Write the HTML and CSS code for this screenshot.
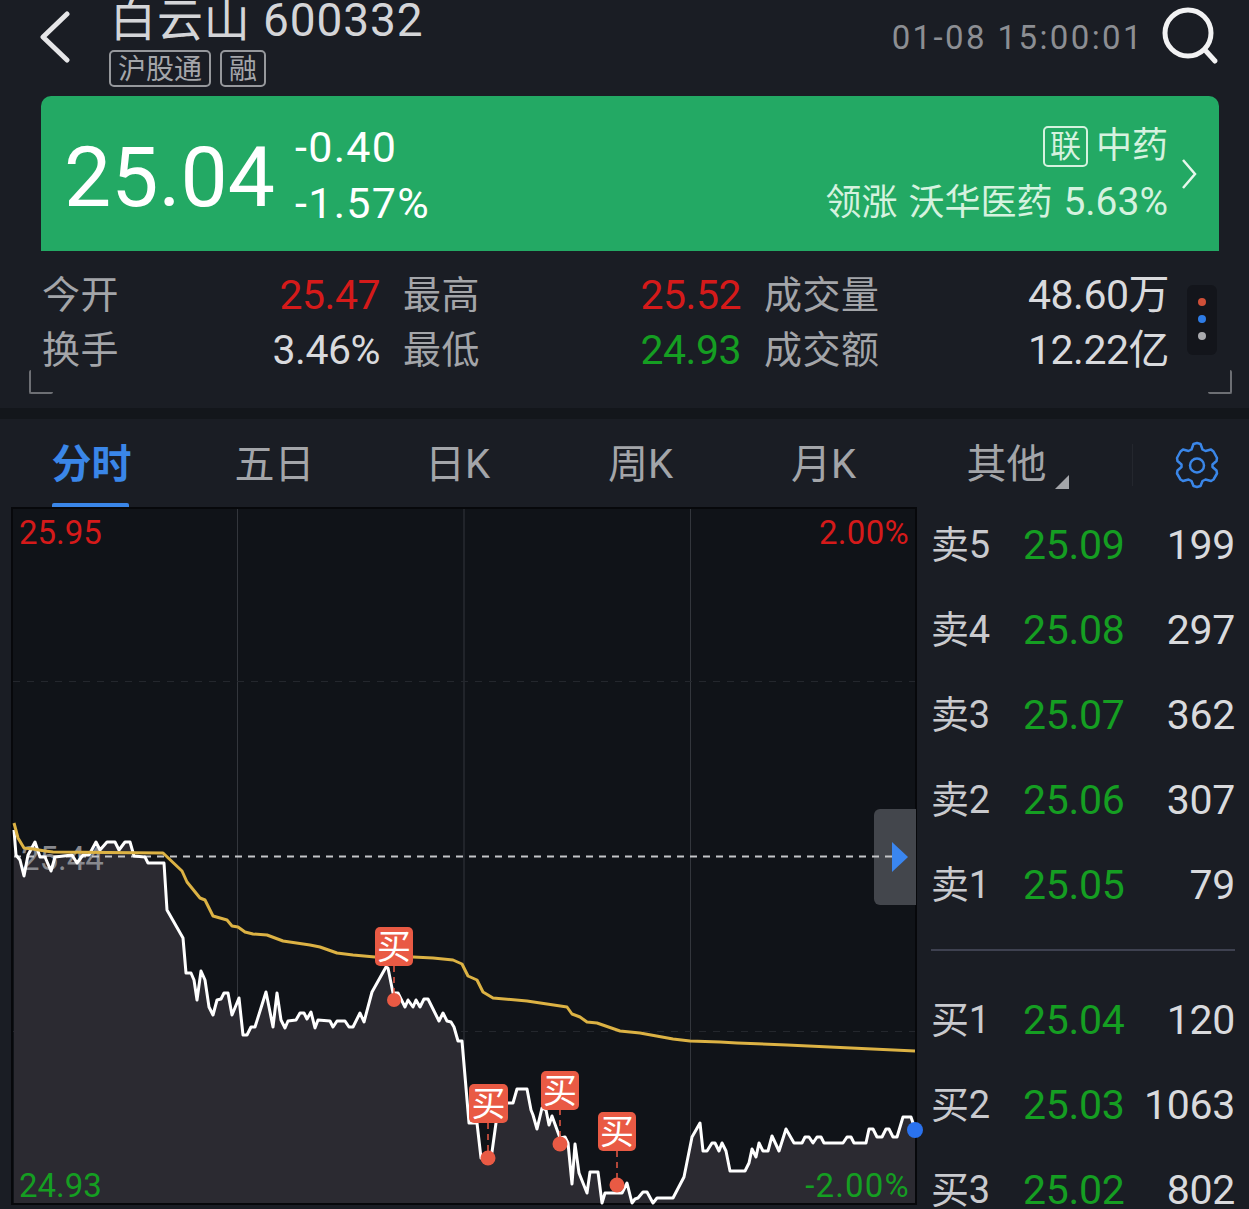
FILE: index.html
```html
<!DOCTYPE html>
<html lang="zh-CN">
<head>
  <meta charset="UTF-8" />
  <meta name="viewport" content="width=device-width, initial-scale=1.0"/>
  <title>白云山 600332</title>
  <link rel="stylesheet" href="styles.css">
</head>
<body>
<div class="page">

  <header class="topbar">
    <svg class="back" width="32" height="52" viewBox="0 0 32 52"><path d="M29 3 L5 26 L29 49" /></svg>
    <div class="title-block">
      <div class="title">白云山 600332</div>
      <div class="tags"><span class="tag">沪股通</span><span class="tag">融</span></div>
    </div>
    <div class="time">01-08 15:00:01</div>
    <svg class="search" width="60" height="60" viewBox="0 0 60 60"><circle cx="26" cy="27" r="23" /><path d="M43 44 L53 55" /></svg>
  </header>

  <section class="quote">
    <div class="price">25.04</div>
    <div class="change">
      <div>-0.40</div>
      <div>-1.57%</div>
    </div>
    <div class="sector">
      <div class="sector-name"><span class="lian">联</span>中药</div>
      <div class="sector-lead">领涨 沃华医药 <span class="lead-pct">5.63%</span></div>
    </div>
    <svg class="more" width="16" height="30" viewBox="0 0 16 30"><path d="M2 1 L14 15 L2 29" /></svg>
  </section>

  <section class="stats">
    <div class="stat-col">
      <div class="stat"><span class="stat-label">今开</span><span class="red">25.47</span></div>
      <div class="stat"><span class="stat-label">换手</span><span>3.46%</span></div>
    </div>
    <div class="stat-col">
      <div class="stat"><span class="stat-label">最高</span><span class="red">25.52</span></div>
      <div class="stat"><span class="stat-label">最低</span><span class="green">24.93</span></div>
    </div>
    <div class="stat-col wide">
      <div class="stat"><span class="stat-label">成交量</span><span>48.60万</span></div>
      <div class="stat"><span class="stat-label">成交额</span><span>12.22亿</span></div>
    </div>
    <div class="pager"><i class="dot-red"></i><i class="dot-blue"></i><i class="dot-grey"></i></div>
    <span class="corner corner-left"></span>
    <span class="corner corner-right"></span>
  </section>

  <nav class="tabs">
    <div class="tab active">分时</div>
    <div class="tab">五日</div>
    <div class="tab">日K</div>
    <div class="tab">周K</div>
    <div class="tab">月K</div>
    <div class="tab other">其他</div>
    <div class="tab-sep"></div>
    <svg class="gear" width="46" height="48" viewBox="0 0 46 48">
      <path d="M23 2 L26.5 3 L28.5 8.5 L31.5 10 L37 8.5 L39.5 10.5 L43 17 L42.5 20 L38.5 23.5 L38.5 26 L42.5 29.5 L43 32.5 L39.5 38.5 L37 40 L31.5 38.5 L28.5 40 L26.5 45 L23 46 L19.5 45 L17.5 40 L14.5 38.5 L9 40 L6.5 38.5 L3 32.5 L3.5 29.5 L7.5 26 L7.5 23.5 L3.5 20 L3 17 L6.5 10.5 L9 8.5 L14.5 10 L17.5 8.5 L19.5 3 Z" />
      <circle cx="23" cy="24.5" r="7" />
    </svg>
  </nav>

  <main class="board">
    <div class="chart">
      <svg class="chart-svg" width="906" height="698" viewBox="11 507 906 698">
        <g class="grid">
          <path d="M237.5 509V1203M464 509V1203M690.5 509V1203" />
        </g>
        <path class="grid-dash" d="M13 681.5H915M13 1031.5H915" />

        <polygon class="area" points="14,830 16,855 20,860 24,876 28,855 35,842 40,857 45,857 51,871 55,857 72,855 77,863 83,855 89,855 96,842 100,850 107,842 115,842 119,850 125,842 130,842 134,856 145,857 148,863 164,863 167,910 183,938 186,973 191,973 194,980 197,1000 201,971 205,980 209,1007 213,1015 217,1000 221,999 224,993 228,993 232,1015 239,998 243,1035 247,1035 251,1027 255,1027 266,992 273,1027 277,993 281,1020 285,1028 288,1021 296,1020 300,1013 304,1013 307,1019 311,1012 315,1028 318,1020 330,1021 333,1027 337,1021 345,1021 349,1027 353,1027 360,1013 364,1022 372,992 386,967 388,968 393,993 398,993 405,1007 408,1000 413,1007 416,1000 420,1007 424,999 428,999 439,1021 443,1013 447,1021 451,1022 454,1027 458,1041 462,1041 469,1123 477,1123 481,1158 492,1152 496,1123 500,1103 513,1103 517,1089 527,1089 531,1110 533,1115 537,1129 542,1108 546,1110 549,1125 552,1116 560,1138 565,1137 568,1143 572,1184 575,1144 579,1173 587,1193 590,1172 598,1172 602,1203 605,1193 622,1193 627,1183 632,1203 635,1199 638,1198 643,1192 647,1192 653,1203 657,1198 673,1198 684,1177 692,1137 700,1123 703,1151 707,1151 712,1143 715,1143 719,1151 722,1143 726,1151 730,1171 745,1171 749,1163 752,1149 756,1157 759,1143 763,1151 768,1151 772,1136 779,1151 786,1129 794,1143 802,1143 805,1137 809,1137 813,1143 817,1137 821,1137 824,1143 843,1143 847,1137 851,1137 854,1143 866,1143 869,1129 873,1129 877,1137 882,1137 886,1129 889,1129 893,1137 897,1137 903,1117 911,1117 915,1129 915,1203 14,1203" />

        <text class="axis axis-grey" x="21" y="870">25.44</text>

        <path class="handle" d="M916 809H880a6 6 0 0 0 -6 6V899a6 6 0 0 0 6 6H916Z" />
        <path class="prev-close" d="M14 856.5H905" />
        <polygon class="handle-arrow" points="892,842 908,857 892,872" />

        <polyline class="line-white" points="14,830 16,855 20,860 24,876 28,855 35,842 40,857 45,857 51,871 55,857 72,855 77,863 83,855 89,855 96,842 100,850 107,842 115,842 119,850 125,842 130,842 134,856 145,857 148,863 164,863 167,910 183,938 186,973 191,973 194,980 197,1000 201,971 205,980 209,1007 213,1015 217,1000 221,999 224,993 228,993 232,1015 239,998 243,1035 247,1035 251,1027 255,1027 266,992 273,1027 277,993 281,1020 285,1028 288,1021 296,1020 300,1013 304,1013 307,1019 311,1012 315,1028 318,1020 330,1021 333,1027 337,1021 345,1021 349,1027 353,1027 360,1013 364,1022 372,992 386,967 388,968 393,993 398,993 405,1007 408,1000 413,1007 416,1000 420,1007 424,999 428,999 439,1021 443,1013 447,1021 451,1022 454,1027 458,1041 462,1041 469,1123 477,1123 481,1158 492,1152 496,1123 500,1103 513,1103 517,1089 527,1089 531,1110 533,1115 537,1129 542,1108 546,1110 549,1125 552,1116 560,1138 565,1137 568,1143 572,1184 575,1144 579,1173 587,1193 590,1172 598,1172 602,1203 605,1193 622,1193 627,1183 632,1203 635,1199 638,1198 643,1192 647,1192 653,1203 657,1198 673,1198 684,1177 692,1137 700,1123 703,1151 707,1151 712,1143 715,1143 719,1151 722,1143 726,1151 730,1171 745,1171 749,1163 752,1149 756,1157 759,1143 763,1151 768,1151 772,1136 779,1151 786,1129 794,1143 802,1143 805,1137 809,1137 813,1143 817,1137 821,1137 824,1143 843,1143 847,1137 851,1137 854,1143 866,1143 869,1129 873,1129 877,1137 882,1137 886,1129 889,1129 893,1137 897,1137 903,1117 911,1117 915,1129" />

        <polyline class="line-avg" points="14,823 18,838 24,848 33,849 45,851 53,852 163,853 182,871 187,882 200,898 205,900 213,916 227,920 232,926 238,927 245,932 253,934 267,935 283,941 310,945 320,947 337,953 353,955 375,957 413,957 433,958 453,960 462,964 468,976 477,980 483,992 493,998 527,1001 567,1007 572,1014 580,1017 587,1022 597,1023 620,1031 640,1033 673,1039 690,1041 720,1042 737,1043 787,1045 915,1051" />

        <!-- buy markers -->
        <path class="mark-stem" d="M394 966V1000M488 1123V1158M560 1109V1143M617 1151V1185" />
        <circle class="mark-dot" cx="394" cy="1000" r="7" />
        <circle class="mark-dot" cx="488" cy="1158" r="7.500" />
        <circle class="mark-dot" cx="560" cy="1144" r="7.500" />
        <circle class="mark-dot" cx="617" cy="1185" r="7.500" />
        <rect class="mark" x="375" y="927" width="38" height="39" rx="5" />
        <rect class="mark" x="469" y="1084" width="39" height="39" rx="5" />
        <rect class="mark" x="541" y="1071" width="38" height="39" rx="5" />
        <rect class="mark" x="598" y="1112" width="38" height="39" rx="5" />
        <text class="mark-text" x="394" y="959">买</text>
        <text class="mark-text" x="488.500" y="1116">买</text>
        <text class="mark-text" x="560" y="1103">买</text>
        <text class="mark-text" x="617" y="1144">买</text>

        <circle class="last-dot" cx="915" cy="1130" r="8" />

        <text class="axis axis-red" x="19" y="544">25.95</text>
        <text class="axis axis-red end" x="909" y="544">2.00%</text>
        <text class="axis axis-green" x="19" y="1197">24.93</text>
        <text class="axis axis-green end neg" x="910" y="1197">-2.00%</text>
      </svg>
    </div>

    <aside class="book">
      <div class="book-side">
        <div class="book-row"><span class="book-label">卖5</span><span class="book-price">25.09</span><span class="book-vol">199</span></div>
        <div class="book-row"><span class="book-label">卖4</span><span class="book-price">25.08</span><span class="book-vol">297</span></div>
        <div class="book-row"><span class="book-label">卖3</span><span class="book-price">25.07</span><span class="book-vol">362</span></div>
        <div class="book-row"><span class="book-label">卖2</span><span class="book-price">25.06</span><span class="book-vol">307</span></div>
        <div class="book-row"><span class="book-label">卖1</span><span class="book-price">25.05</span><span class="book-vol">79</span></div>
      </div>
      <div class="book-line"></div>
      <div class="book-side">
        <div class="book-row"><span class="book-label">买1</span><span class="book-price">25.04</span><span class="book-vol">120</span></div>
        <div class="book-row"><span class="book-label">买2</span><span class="book-price">25.03</span><span class="book-vol">1063</span></div>
        <div class="book-row"><span class="book-label">买3</span><span class="book-price">25.02</span><span class="book-vol">802</span></div>
      </div>
    </aside>
  </main>

</div>
</body>
</html>
```

FILE: styles.css
```css
* {
  box-sizing: border-box;
}
body {
  margin: 0;
  background: #1a1d24;
  color: #d9dadd;
  font-family: Roboto, "Noto Sans CJK SC", sans-serif;
}
.page {
  width: 1249px;
  height: 1209px;
  overflow: hidden;
}

/* top bar */
.topbar {
  height: 96px;
  display: flex;
  align-items: flex-start;
  padding-left: 38px;
}
.back {
  margin-top: 11px;
  flex: none;
}
.back path {
  fill: none;
  stroke: #e6e6e8;
  stroke-width: 5;
  stroke-linecap: round;
  stroke-linejoin: round;
}
.title-block {
  margin-left: 40px;
  margin-top: -5px;
}
.title {
  font-size: 46px;
  line-height: 50px;
  letter-spacing: .9px;
  color: #d4d5d8;
  white-space: nowrap;
}
.tags {
  display: flex;
  gap: 9px;
  margin-top: 5px;
  margin-left: -1px;
}
.tag {
  height: 37px;
  padding: 0 7px;
  border: 2px solid #96989c;
  border-radius: 5px;
  font-size: 28px;
  line-height: 35px;
  color: #a4a6aa;
}
.time {
  margin-left: auto;
  margin-top: 18px;
  font-size: 33px;
  line-height: 40px;
  letter-spacing: 2.4px;
  color: #8c8e93;
  white-space: nowrap;
}
.search {
  margin: 6px 27px 0 18px;
  flex: none;
}
.search circle,
.search path {
  fill: none;
  stroke: #f2f2f3;
  stroke-width: 5;
  stroke-linecap: round;
}

/* green quote card */
.quote {
  height: 155px;
  margin: 0 30px 0 41px;
  padding: 0 22px 0 23px;
  display: flex;
  align-items: center;
  background: #23a964;
  border-radius: 10px 10px 0 0;
  color: #fff;
}
.price {
  font-size: 84px;
  line-height: 100px;
  margin-top: 8px;
}
.change {
  margin-left: 20px;
  font-size: 43px;
  line-height: 56px;
  margin-top: 3px;
  letter-spacing: 1.3px;
}
.sector {
  margin-left: auto;
  text-align: right;
  color: #d5f2df;
  font-size: 36px;
  line-height: 56px;
  margin-top: 2px;
  word-spacing: 2px;
}
.sector-name {
  display: flex;
  justify-content: flex-end;
  align-items: center;
}
.lead-pct {
  font-size: 39px;
}
.lian {
  width: 45px;
  height: 41px;
  margin-right: 8px;
  border: 2px solid #d5f2df;
  border-radius: 5px;
  text-align: center;
  font-size: 31px;
  line-height: 38px;
}
.more {
  margin-left: 13px;
  flex: none;
}
.more path {
  fill: none;
  stroke: #e6f7ec;
  stroke-width: 2.5;
}

/* stats */
.stats {
  position: relative;
  height: 157px;
  padding: 17px 0 0 42px;
  display: flex;
  gap: 23px;
  font-size: 41px;
  line-height: 55px;
  letter-spacing: -.5px;
}
.stat-col {
  width: 338px;
}
.stat-col.wide {
  width: 405px;
}
.stat {
  display: flex;
  justify-content: space-between;
}
.stat-label {
  font-size: 38px;
  letter-spacing: .5px;
  color: #a3a5a9;
}
.red {
  color: #d51a1a;
}
.green {
  color: #159e22;
}
.pager {
  position: absolute;
  left: 1187px;
  top: 34px;
  width: 30px;
  height: 70px;
  padding-top: 13px;
  display: flex;
  flex-direction: column;
  align-items: center;
  gap: 9px;
  background: #13151b;
  border-radius: 6px;
}
.pager i {
  width: 8px;
  height: 8px;
  border-radius: 50%;
}
.dot-red {
  background: #cf4f38;
}
.dot-blue {
  background: #2e7ce6;
}
.dot-grey {
  background: #a9aaae;
}
.corner {
  position: absolute;
  top: 119px;
  width: 24px;
  height: 24px;
  border-bottom: 2px solid #6d6f74;
  border-radius: 2px;
}
.corner-left {
  left: 29px;
  border-left: 2px solid #6d6f74;
}
.corner-right {
  left: 1208px;
  border-right: 2px solid #6d6f74;
}

/* period tabs */
.tabs {
  height: 99px;
  padding-top: 11px;
  position: relative;
  display: flex;
  align-items: center;
  border-top: 11px solid #13161b;
}
.tab {
  width: 183px;
  margin-top: -8px;
  text-align: center;
  font-size: 40px;
  line-height: 50px;
  color: #a3a5a9;
}
.tab.active {
  position: relative;
  color: #3a86e8;
  font-weight: 700;
}
.tab.active::after {
  content: "";
  position: absolute;
  left: 52px;
  top: 63px;
  width: 77px;
  height: 4px;
  border-radius: 2px 2px 0 0;
  background: #3a86e8;
}
.tab.other {
  position: relative;
}
.tab.other::after {
  content: "";
  position: absolute;
  left: 140px;
  top: 35px;
  border-left: 14px solid transparent;
  border-bottom: 14px solid #a3a5a9;
}
.tab-sep {
  width: 1px;
  height: 42px;
  margin-left: 34px;
  margin-top: -8px;
  background: #24272e;
}
.gear {
  margin-left: 41px;
  margin-top: -8px;
  flex: none;
}
.gear path,
.gear circle {
  fill: none;
  stroke: #3a86e8;
  stroke-width: 2.5;
  stroke-linejoin: round;
}

/* chart + order book */
.board {
  display: flex;
  height: 702px;
}
.chart {
  width: 906px;
  height: 698px;
  margin-left: 11px;
  flex: none;
  background: #101318;
  border: 2px solid #07080b;
}
.chart-svg {
  display: block;
  margin: -2px;
  overflow: visible;
}
.grid path {
  stroke: #33363c;
  stroke-width: 1;
  fill: none;
}
.grid-dash {
  stroke: #24272d;
  stroke-width: 1;
  stroke-dasharray: 7 7;
  fill: none;
}
.area {
  fill: #2b2a31;
}
.handle {
  fill: #43464c;
}
.handle-arrow {
  fill: #3a86f0;
}
.prev-close {
  stroke: #c4c5c8;
  stroke-width: 2;
  stroke-dasharray: 7 6;
  fill: none;
}
.line-white {
  fill: none;
  stroke: #fff;
  stroke-width: 3;
  stroke-linejoin: round;
}
.line-avg {
  fill: none;
  stroke: #dcb244;
  stroke-width: 3;
  stroke-linejoin: round;
}
.mark,
.mark-dot {
  fill: #e95a44;
}
.mark-stem {
  stroke: #e95a44;
  stroke-width: 1.5;
  stroke-dasharray: 6 5;
  fill: none;
}
.mark-text {
  fill: #fff;
  font-size: 34px;
  text-anchor: middle;
}
.last-dot {
  fill: #2a72ee;
}
.axis {
  font-size: 33px;
}
.axis.end {
  text-anchor: end;
  letter-spacing: .3px;
}
.axis.neg {
  letter-spacing: 1.200px;
}
.axis-red {
  fill: #d51a1a;
}
.axis-green {
  fill: #159e22;
}
.axis-grey {
  fill: #88898e;
}

.book {
  flex: 1;
  padding: 0 14px 0 14px;
  font-size: 41px;
}
.book-side {
  display: flex;
  flex-direction: column;
  gap: 9px;
}
.book-row {
  height: 76px;
  display: flex;
  align-items: center;
  line-height: 76px;
  letter-spacing: -.3px;
}
.book-label {
  width: 92px;
  font-size: 38px;
  color: #c9cace;
}
.book-price {
  color: #159e22;
}
.book-vol {
  margin-left: auto;
  color: #d9dadd;
}
.book-line {
  height: 2px;
  margin: 26px 0 31px;
  background: #3e4150;
}
```
